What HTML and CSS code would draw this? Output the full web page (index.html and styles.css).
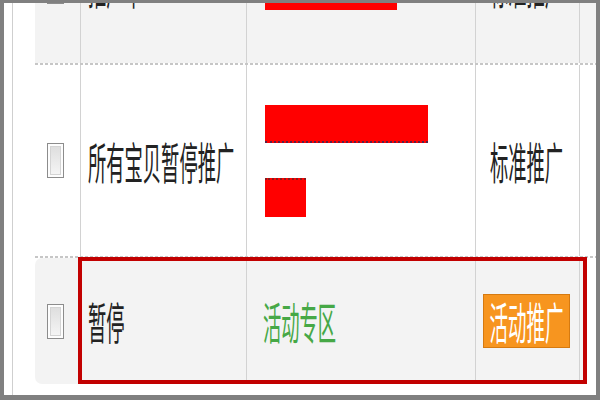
FILE: index.html
```html
<!DOCTYPE html>
<html lang="zh-CN">
<head>
<meta charset="utf-8">
<title>推广列表</title>
<link rel="stylesheet" href="styles.css">
</head>
<body>
<div class="frame">
  <div class="rail"></div>
  <div class="table">
    <div class="row row-a">
      <div class="cell c0"><span class="cb"></span></div>
      <div class="cell c1"><span class="t">推广中</span></div>
      <div class="cell c2 bars-a"><span class="bar bar-a"></span></div>
      <div class="cell c3"><span class="t">标准推广</span></div>
      <div class="cell c4"></div>
    </div>
    <div class="sep"></div>
    <div class="row row-b">
      <div class="cell c0"><span class="cb"></span></div>
      <div class="cell c1"><span class="t">所有宝贝暂停推广</span></div>
      <div class="cell c2 bars-b"><span class="bar bar-1"></span><span class="bar bar-2"></span></div>
      <div class="cell c3"><span class="t">标准推广</span></div>
      <div class="cell c4"></div>
    </div>
    <div class="sep"></div>
    <div class="row row-c">
      <div class="cell c0 c0-c"><span class="cb"></span></div>
      <div class="hl">
        <div class="cell c1 c1-c"><span class="t">暂停</span></div>
        <div class="cell c2 c2-c"><span class="t green">活动专区</span></div>
        <div class="cell c3 c3-c"><span class="btn"><span class="t">活动推广</span></span></div>
      </div>
    </div>
  </div>
</div>
</body>
</html>
```
FILE: styles.css
```css
html, body {
  margin: 0;
  padding: 0;
}
body {
  background: #808080;
  height: 400px;
  overflow: hidden;
  font-family: "Noto Sans CJK SC", "Noto Sans", sans-serif;
  color: #222;
}
.frame {
  margin: 3px 4px 5px 4px;
  height: 392px;
  background: #fff;
  display: flex;
  overflow: hidden;
}
.rail {
  width: 8px;
  border-right: 1px solid #cfcfcf;
  flex: none;
}
.table {
  margin-left: 22px;
  margin-top: -94px;
  flex: 1;
  display: flex;
  flex-direction: column;
}
.row {
  display: flex;
  flex: none;
}
.row-a {
  height: 154px;
  background: #f3f3f3;
}
.row-b {
  height: 191px;
  background: #fff;
}
.row-c {
  height: 126px;
}
.sep {
  height: 2px;
  flex: none;
  background: repeating-linear-gradient(90deg, #c6c6c6 0 3px, transparent 3px 5px);
}
.cell {
  box-sizing: border-box;
  display: flex;
  align-items: center;
  flex: none;
}
.c0 {
  width: 46px;
  padding-left: 12px;
  border-right: 1px solid #d2d2d2;
}
.c1 {
  width: 166px;
  padding-left: 7px;
  border-right: 1px solid #d2d2d2;
}
.c2 {
  width: 229px;
  padding-left: 18px;
  border-right: 1px solid #d2d2d2;
}
.c3 {
  width: 104px;
  padding-left: 14px;
  border-right: 1px solid #d2d2d2;
}
.c4 {
  flex: 1;
}
.row-b .c4 {
  background: #fff;
}
.c0-c {
  width: 43px;
  border-right: none;
  background: #f3f3f3;
  border-radius: 7px 0 0 7px;
}
.hl {
  width: 509px;
  height: 127px;
  margin-top: -1px;
  box-sizing: border-box;
  border: 4px solid #c20000;
  background: #f3f3f3;
  display: flex;
  flex: none;
}
.c1-c {
  width: 165px;
  padding-left: 6px;
}
.c2-c {
  padding-left: 16px;
}
.c3-c {
  padding-left: 7px;
}
.t {
  display: inline-block;
  font-size: 18.3px;
  line-height: 18px;
  white-space: nowrap;
  transform: scaleY(2.4);
}
.green {
  color: #46a846;
}
.cb {
  display: block;
  width: 17px;
  height: 35px;
  box-sizing: border-box;
  border: 1px solid #8c8c8c;
  background: linear-gradient(#dcdcdc, #f7f7f7);
  box-shadow: inset 0 0 0 2px #fdfdfd, inset 0 0 0 3px #d4d4d4;
}
.bars-a {
  align-items: flex-end;
  padding-bottom: 53px;
}
.bars-b {
  flex-direction: column;
  align-items: flex-start;
  justify-content: center;
  gap: 35px;
}
.bar {
  display: block;
  background: #ff0000;
  box-sizing: border-box;
}
.bar-a {
  width: 132px;
  height: 38px;
}
.bar-1 {
  width: 163px;
  height: 38px;
  border-bottom: 2px dotted #5a2246;
}
.bar-2 {
  width: 41px;
  height: 39px;
  border-top: 2px dotted #8a1a1a;
}
.btn {
  display: flex;
  align-items: center;
  justify-content: center;
  width: 87px;
  height: 54px;
  box-sizing: border-box;
  background: #f7951f;
  border: 1px solid #d67a10;
  color: #fff;
}
.btn .t {
  font-size: 18.5px;
}
```
